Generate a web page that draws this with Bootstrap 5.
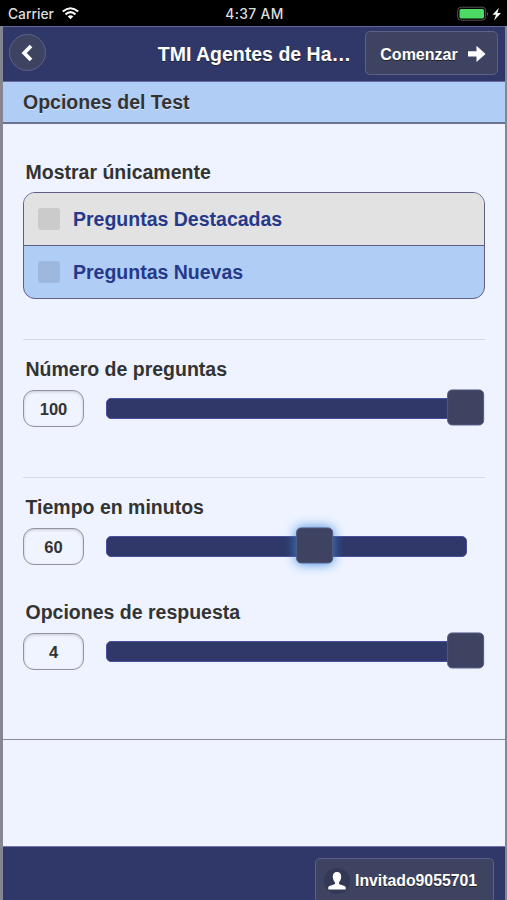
<!DOCTYPE html>
<html lang="es">
<head>
<meta charset="utf-8">
<meta name="viewport" content="width=device-width, initial-scale=1">
<title>Opciones del Test</title>
<link href="https://cdn.jsdelivr.net/npm/bootstrap@5.3.0/dist/css/bootstrap.min.css" rel="stylesheet">
<style>
  body { font-family: "Liberation Sans", Arial, sans-serif; font-weight: 700; font-size: 19.5px; line-height: 24px; color: #333; background: #eef3ff; height: 900px; overflow: hidden; }
  .status-bar { height: 26px; background: #000; color: #ddd; font: 500 13.8px/26px Inter, sans-serif; padding: 1px 6px 0 8px; }
  .status-bar .side { flex: 1 1 0; }
  .clock { letter-spacing: .35px; }
  .frame { border: solid #858691; border-width: 0 2px 0 3px; }
  .top-bar { height: 55px; background: #2f3869; border-top: 1px solid #65689f; color: #fff; padding: 4px 7px 0 6px; }
  .tool-btn { background: #3e4361; border: 1px solid #5b628a; border-radius: 5px; color: #fff; font-size: 16px; font-weight: 700; text-shadow: 0 1px 0 #222; }
  .back-btn { width: 37px; height: 37px; border-radius: 50%; margin-top: 3px; }
  .start-btn { width: 133px; height: 44px; gap: 10px; margin-left: 14px; }
  .start-btn span { padding: 3px 0 0 3px; }
  .start-btn svg { margin-top: 1px; }
  .page-title { text-align: right; text-shadow: 0 1px 0 #222; padding-top: 11px; }
  .section-title { height: 43px; background: #afcdf5; border-top: 1px solid #65689f; border-bottom: 2px solid #6b7290; padding: 8px 20px 0; text-shadow: 0 1px 0 #d8e6fa; }
  .options-panel { height: 616px; padding: 36px 20px 0; border-bottom: 1px solid #8c8d98; }
  .group-label { padding-left: 2.5px; }
  .check-list { height: 107px; margin-top: 8px; border: 1px solid #5f5f83; border-radius: 12px; background: #afcdf5; color: #25388a; overflow: hidden; }
  .check-row { height: 52px; gap: 13px; padding: 0 14px; }
  .check-row:first-child { height: 53px; background: #e2e2e2; border-bottom: 1px solid #5f5f83; }
  .check-box { width: 22px; height: 22px; border-radius: 3px; background: rgba(0,0,0,.1); }
  .divider { height: 1px; background: #d5d9e6; }
  .slider-row { height: 37px; margin-top: 9px; }
  .value-box { width: 61px; height: 37px; border: 1.5px solid #92939e; border-radius: 11px; background: #f0f4ff; box-shadow: inset 0 1px 3px rgba(0,0,0,.18); font-size: 16.5px; color: #333; }
  .track { width: 361px; height: 21px; margin-left: 22px; margin-bottom: 1px; border: 1px solid #4a4f9b; border-radius: 5px; background: #2f3869; }
  .knob { width: 37px; height: 36px; top: 50%; transform: translate(-51%, -51.500%); border: 1px solid #555a83; border-radius: 5px; background: #3e4361; }
  .knob.active-knob { box-shadow: 0 0 12px #3388dd; }
  .spacer-area { height: 106px; }
  .bottom-bar { height: 54px; background: #2f3869; border-top: 1px solid #7276ad; padding: 11px 11px 0 0; }
  .user-btn { width: 179px; height: 46px; gap: 5px; font-size: 15.8px; }
  .user-icon { width: 26px; height: 26px; border-radius: 50%; background: #333955; }
</style>
</head>
<body>
<div class="status-bar d-flex align-items-center">
  <div class="side d-flex align-items-center gap-2"><span>Carrier</span>
    <svg width="17" height="13" viewBox="0 0 17 13" fill="none" stroke="#fff" stroke-width="2.1"><path d="M.8 4.5Q8.500-2 16.200 4.500M3.500 7.400Q8.500 3 13.500 7.400"/><path d="M5.700 9.300Q8.500 7 11.300 9.300L8.500 12.300Z" fill="#fff" stroke="none"/></svg>
  </div>
  <span class="clock">4:37 AM</span>
  <div class="side d-flex align-items-center justify-content-end">
    <svg width="45" height="16" viewBox="0 0 45 16"><rect x="1.700" y="1.200" width="28" height="13" rx="3.500" fill="none" stroke="#555"/><rect x="3.500" y="3" width="24.500" height="9.500" rx="1.500" fill="#4cd964"/><path d="M31 6q2 2 0 4z" fill="#666"/><path d="M43 1.700L36.500 8.700H40L38 14.500L45 6.900H41.300Z" fill="#fff"/></svg>
  </div>
</div>
<div class="frame">
  <header class="top-bar d-flex align-items-start">
    <button class="tool-btn back-btn d-flex align-items-center justify-content-center p-0" aria-label="Atrás"><svg width="14" height="18" viewBox="0 0 14 18" fill="none" stroke="#fff" stroke-width="3.800"><path d="M10 2L3.200 9L10 16"/></svg></button>
    <div class="page-title flex-grow-1">TMI Agentes de Ha…</div>
    <button class="tool-btn start-btn d-flex align-items-center justify-content-center p-0"><span>Comenzar</span><svg width="18" height="18" viewBox="0 0 18 18" fill="#fff"><path d="M0 6.200H8.500V.8L17.500 9L8.500 17V11.500H0Z"/></svg></button>
  </header>
  <div class="section-title">Opciones del Test</div>
  <main class="options-panel">
    <div class="group-label">Mostrar únicamente</div>
    <div class="check-list">
      <div class="check-row d-flex align-items-center"><span class="check-box"></span><span>Preguntas Destacadas</span></div>
      <div class="check-row d-flex align-items-center"><span class="check-box"></span><span>Preguntas Nuevas</span></div>
    </div>
    <div class="divider" style="margin-top:40px"></div>
    <div class="group-label" style="margin-top:17px">Número de preguntas</div>
    <div class="slider-row d-flex align-items-center"><div class="value-box d-flex align-items-center justify-content-center">100</div><div class="track position-relative"><div class="knob position-absolute" style="left:100%"></div></div></div>
    <div class="divider" style="margin-top:50px"></div>
    <div class="group-label" style="margin-top:17px">Tiempo en minutos</div>
    <div class="slider-row d-flex align-items-center"><div class="value-box d-flex align-items-center justify-content-center">60</div><div class="track position-relative"><div class="knob active-knob position-absolute" style="left:58%"></div></div></div>
    <div class="group-label" style="margin-top:35px">Opciones de respuesta</div>
    <div class="slider-row d-flex align-items-center"><div class="value-box d-flex align-items-center justify-content-center">4</div><div class="track position-relative"><div class="knob position-absolute" style="left:100%"></div></div></div>
  </main>
  <div class="spacer-area"></div>
  <footer class="bottom-bar d-flex justify-content-end">
    <button class="tool-btn user-btn d-flex align-items-center py-0 pe-0 ps-2"><span class="user-icon d-flex align-items-center justify-content-center"><svg width="18" height="18" viewBox="0 0 18 18" fill="#fff"><path d="M9 0C6 0 4.600 2 4.800 5C5 7.800 6 9.300 7 10.300V12C5.500 13 .3 13.600.3 15.300V17.500H17.700V15.300C17.700 13.600 12.500 13 11 12V10.300C12 9.300 13 7.800 13.200 5C13.400 2 12 0 9 0Z"/></svg></span><span>Invitado9055701</span></button>
  </footer>
</div>
<script src="https://cdn.jsdelivr.net/npm/bootstrap@5.3.0/dist/js/bootstrap.bundle.min.js"></script>
</body>
</html>
